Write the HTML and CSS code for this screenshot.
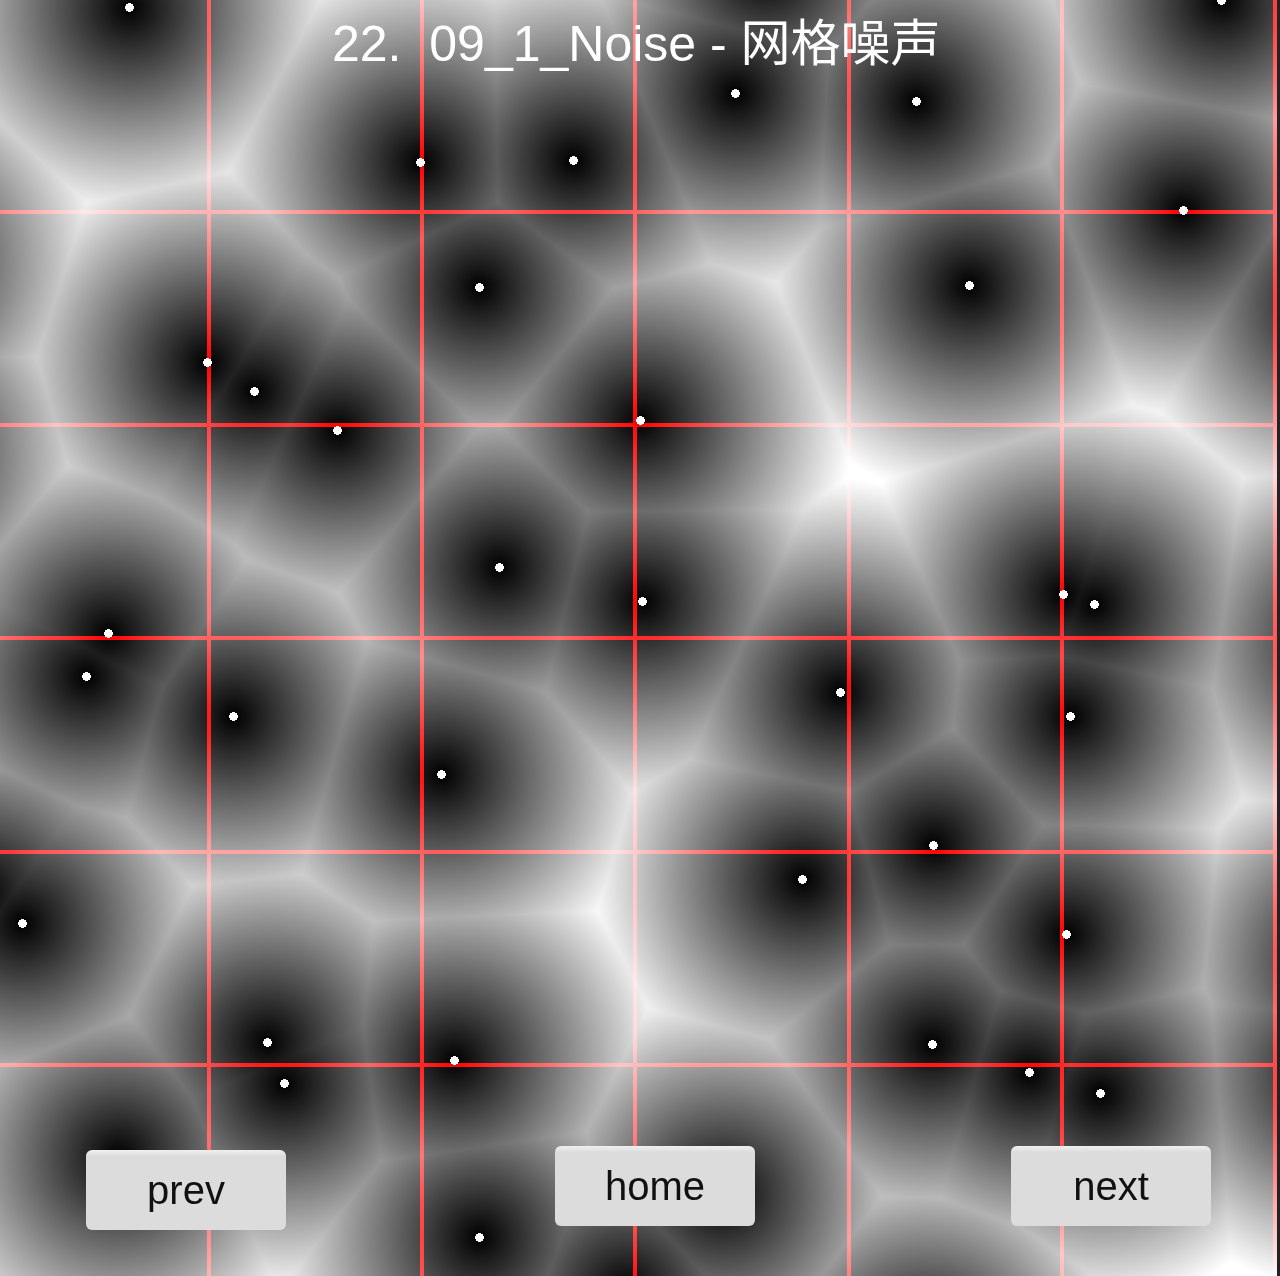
FILE: index.html
```html
<!DOCTYPE html>
<html lang="zh">

<head>
  <meta charset="UTF-8">
  <title>09_1_Noise - 网格噪声</title>
  <link rel="stylesheet" href="styles.css">
</head>

<body>
  <canvas id="noise" width="1280" height="1276"></canvas>
  <h1 class="title">22.&nbsp;&nbsp;09_1_Noise - 网格噪声</h1>
  <div class="controls">
    <button class="btn btn-prev">prev</button>
    <button class="btn btn-home">home</button>
    <button class="btn btn-next">next</button>
  </div>
  <script src="main.js"></script>
</body>

</html>
```

FILE: styles.css
```css
html,
body {
  margin: 0;
  height: 100%;
  overflow: hidden;
  background-color: #222;
}

body {
  position: relative;
  font-family: 'Liberation Sans', 'Noto Sans CJK SC', sans-serif;
}

#noise {
  display: block;
  margin-left: -3px;
}

.title {
  position: absolute;
  top: 16px;
  left: 332px;
  margin: 0;
  font-size: 50px;
  line-height: 56px;
  font-weight: normal;
  color: #fff;
  white-space: nowrap;
  filter: blur(0.5px);
}

.controls {
  position: absolute;
  left: 86px;
  top: 1146px;
  display: flex;
  align-items: flex-start;
}

.btn {
  width: 200px;
  height: 80px;
  padding: 0;
  border: none;
  border-radius: 6px;
  background: linear-gradient(#efefef 0, #e8e8e8 3px, #dcdcdc 6px);
  font-family: inherit;
  font-size: 40px;
  color: #111;
  filter: blur(0.5px);
}

.btn-prev {
  margin-top: 4px;
}

.btn-home {
  margin-left: 269px;
}

.btn-next {
  margin-left: 256px;
}
```

FILE: main.js
```js
// distance field over a 6x6 grid, one feature point per cell
const canvas = document.getElementById("noise");
const ctx = canvas.getContext("2d");
const W = canvas.width;
const H = canvas.height;
const CELL = W / 6;

// canvas sits 3px left of the window, points are in window coords
const SHIFT = 3;

const points = [
  [129, 7], [420, 162], [573, 160], [735, 93], [916, 101], [1221, 0],
  [207, 362], [254, 391], [479, 287], [640, 420], [969, 285], [1183, 210],
  [108, 633], [337, 430], [499, 567], [642, 601], [1063, 594], [1094, 604],
  [86, 676], [233, 716], [441, 774], [840, 692], [933, 845], [1070, 716],
  [22, 923], [267, 1042], [454, 1060], [802, 879], [932, 1044], [1066, 934],
  [118, 1156], [284, 1083], [479, 1237], [722, 1195], [1029, 1072], [1100, 1093],
  // neighbours just outside the window
  [765, -30], [625, 1290], [925, 1350],
  [-105, 261], [-105, 453], [-19, 893],
  [1331, 303], [1350, 640], [1348, 960], [1335, 1075]
];

const img = ctx.createImageData(W, H);
for (let y = 0; y < H; y++) {
  for (let cx = 0; cx < W; cx++) {
    const x = cx - SHIFT;
    let best = 1e9;
    for (const p of points) {
      const dx = p[0] - x;
      const dy = p[1] - y;
      const d = dx * dx + dy * dy;
      if (d < best) best = d;
    }
    const dist = Math.sqrt(best) / CELL;
    let v = Math.min(dist, 1);
    if (dist < 0.02) v = 1;
    const fx = (cx / CELL) % 1;
    const fy = (y / CELL) % 1;
    const gray = Math.round(v * 255);
    const i = (y * W + cx) * 4;
    img.data[i] = (fx >= 0.98 || fy >= 0.98) ? 255 : gray;
    img.data[i + 1] = gray;
    img.data[i + 2] = gray;
    img.data[i + 3] = 255;
  }
}
ctx.putImageData(img, 0, 0);
```
